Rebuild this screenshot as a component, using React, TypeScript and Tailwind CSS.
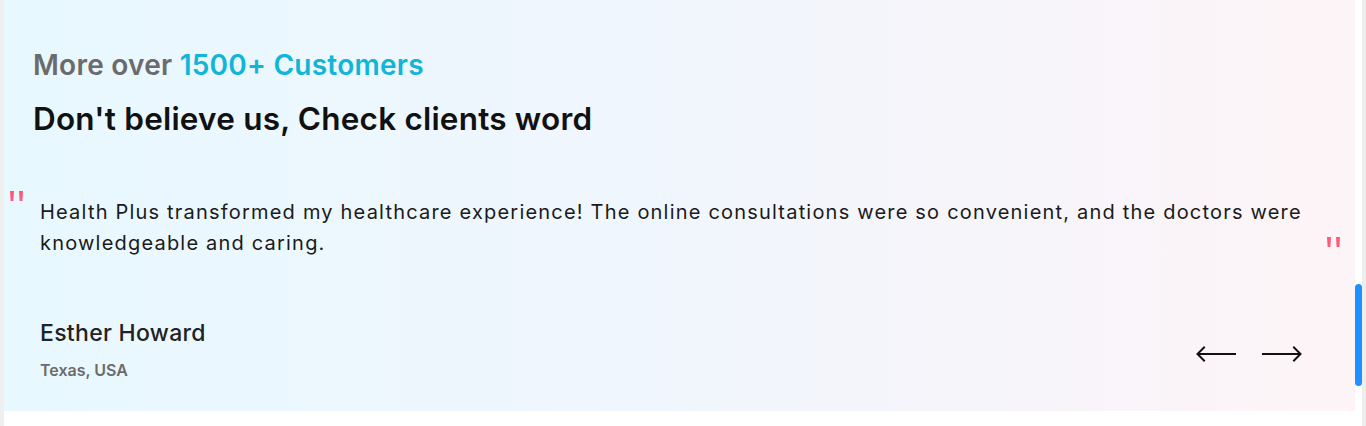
import React from "react"

const QuoteMark = ({ className }: { className?: string }) => (
  <svg width="14" height="10" viewBox="0 0 14 10" className={className} aria-hidden>
    <polygon points="0,0 4,0 3.4,10 0.6,10" fill="#ff5a7a" />
    <polygon points="9,0 13,0 12.4,10 9.6,10" fill="#ff5a7a" />
  </svg>
)

const Arrow = ({ dir }: { dir: "left" | "right" }) => (
  <svg width="40" height="16" viewBox="0 0 40 16" aria-hidden>
    {dir === "left" ? (
      <g stroke="#111" strokeWidth="2" fill="none" strokeLinecap="square">
        <line x1="2" y1="8" x2="39" y2="8" />
        <polyline points="8,1.5 1.5,8 8,14.5" />
      </g>
    ) : (
      <g stroke="#111" strokeWidth="2" fill="none" strokeLinecap="square">
        <line x1="1" y1="8" x2="38" y2="8" />
        <polyline points="32,1.5 38.5,8 32,14.5" />
      </g>
    )}
  </svg>
)

export default function App() {
  return (
    <div className="flex h-[426px] w-full bg-white" style={{ fontFamily: "Inter, 'Open Sans', sans-serif" }}>
      <div className="w-[4px] bg-[#efefef]" />
      <div className="flex-1 flex flex-col">
        <section className="h-[411px] bg-gradient-to-r from-[#e8f8ff] via-[#f1f6fd] to-[#fdf4f7]">
          <div className="px-[29px] pt-[47px]">
            <p className="text-[28px] leading-[36px] font-semibold tracking-[0.25px] text-[#6b6b6b]">
              More over <span className="text-[#10b5d8]">1500+ Customers</span>
            </p>
            <h2 className="mt-[16px] text-[31.5px] leading-[40px] font-semibold tracking-[0.2px] text-[#111]">
              Don't believe us, Check clients word
            </h2>
          </div>

          <div className="flex pl-[6px] pr-[14px] mt-[52px]">
            <QuoteMark className="shrink-0" />
            <p className="ml-[16px] pt-[6px] w-[1275px] text-[20px] leading-[31px] tracking-[1.2px] text-[#1a1a1a]">
              Health Plus transformed my healthcare experience! The online consultations were so convenient, and the
              doctors were knowledgeable and caring.
            </p>
            <QuoteMark className="ml-auto mt-[46px] shrink-0" />
          </div>

          <div className="flex items-start justify-between pl-[36px] pr-[53px] mt-[60px]">
            <div>
              <p className="text-[23px] leading-[28px] font-medium tracking-[0.3px] text-[#222]">Esther Howard</p>
              <p className="mt-[13px] text-[16px] leading-[20px] font-semibold text-[#6b6b6b]">Texas, USA</p>
            </div>
            <div className="flex items-center gap-[26px] mt-[27px]">
              <Arrow dir="left" />
              <Arrow dir="right" />
            </div>
          </div>
        </section>
      </div>
      <div className="w-[11px] bg-white border-r-[4px] border-[#eeeeee] flex flex-col">
        <div className="mt-[284px] h-[102px] w-[7px] rounded-full bg-[#1e90ff]" />
      </div>
    </div>
  )
}
